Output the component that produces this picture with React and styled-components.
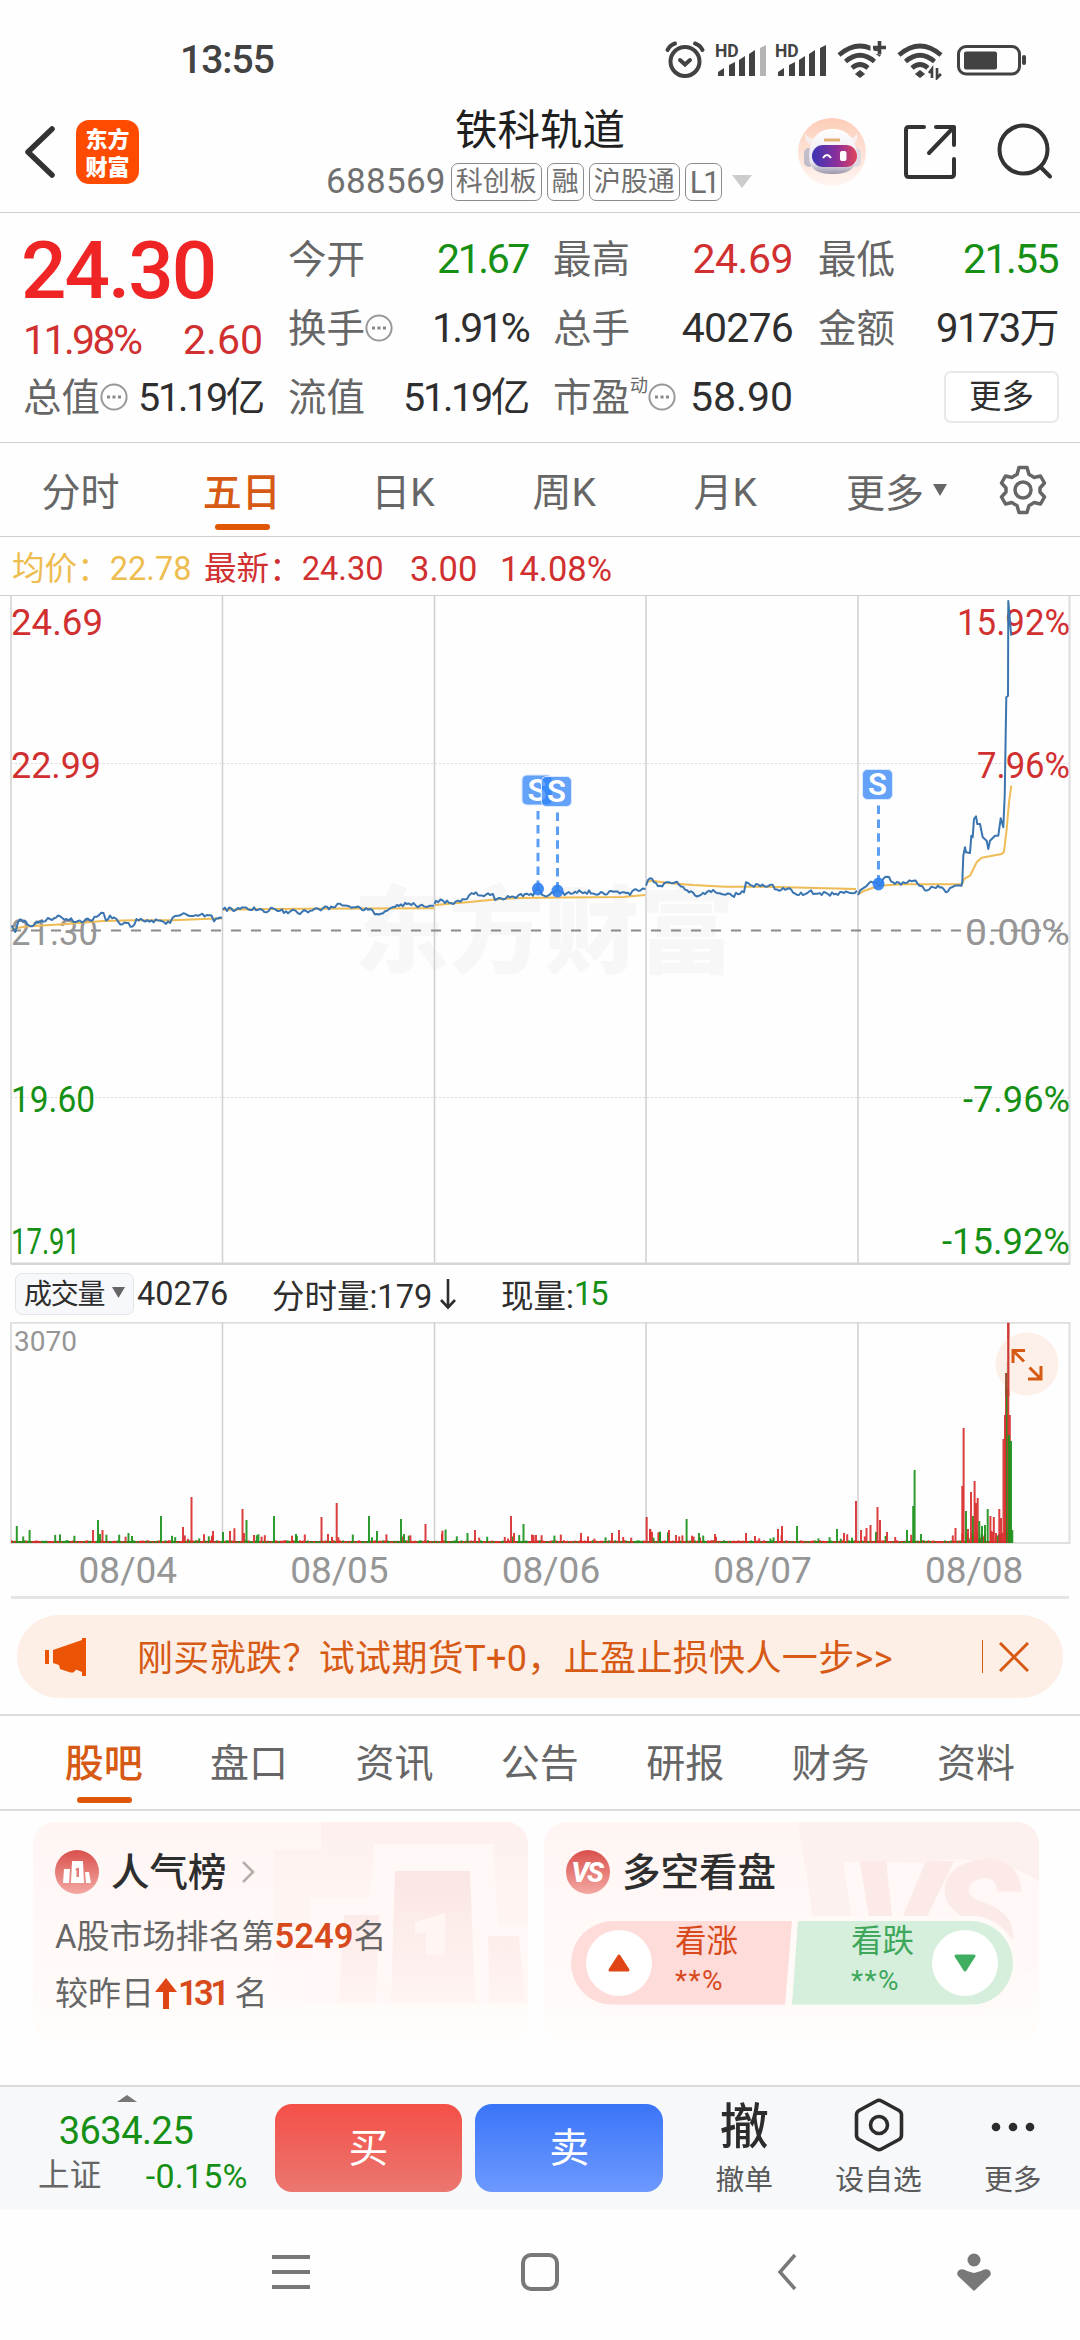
import React from 'react'
import styled, { createGlobalStyle } from 'styled-components'

const GlobalStyle = createGlobalStyle`
  * { box-sizing: border-box; }
  body {
    margin: 0;
    background: #fefefe;
    font-family: Roboto, "Noto Sans CJK SC", sans-serif;
    color: #2e2e2e;
    -webkit-font-smoothing: antialiased;
  }
  svg { display: block; flex: none; }
`
const RED = '#d13030'
const GREEN = '#159015'
const ORANGE = '#d65a14'

const Screen = styled.div`
  width: 1080px;
  height: 2340px;
  overflow: hidden;
  display: flex;
  flex-direction: column;
  white-space: nowrap;
`
const StatusBar = styled.div`
  height: 100px;
  padding: 20px 53px 0 180px;
  display: flex;
  justify-content: space-between;
  align-items: center;
`
const Clock = styled.span`
  font-size: 39px;
  font-weight: 500;
  line-height: 46px;
  letter-spacing: -1px;
  color: #424242;
`
const Header = styled.header`
  height: 114px;
  border-bottom: 1px solid #d0d0d0;
  display: grid;
  grid-template-columns: 298px 480px 1fr;
`
const HeaderLeft = styled.div`
  display: flex;
  align-items: center;
  gap: 20px;
  padding: 0 0 8px 23px;
`
const Logo = styled.div`
  width: 63px;
  height: 64px;
  border-radius: 13px;
  background: #ff4b00;
  color: white;
  font-family: "Noto Sans CJK SC", sans-serif;
  font-weight: 900;
  font-size: 22px;
  line-height: 28px;
  padding-top: 3px;
  text-align: center;
`
const HeaderCenter = styled.div`
  display: flex;
  flex-direction: column;
  align-items: center;
  padding-top: 6px;
`
const StockName = styled.h1`
  margin: 0;
  font-size: 42.5px;
  font-weight: 400;
  line-height: 50px;
  color: #1f1f1f;
  padding-left: 4px;
`
const StockMeta = styled.div`
  display: flex;
  align-items: center;
  gap: 5px;
  margin-top: 7px;
  padding-left: 2px;
  height: 38px;
  svg { margin-left: 5px; }
`
const Code = styled.span`
  font-size: 35px;
  letter-spacing: 0.3px;
  color: #707070;
`
const Badge = styled.span`
  height: 38px;
  border: 1px solid #8c8c8c;
  border-radius: 7px;
  padding: 0 4px;
  font-size: ${p => p.$size || 27}px;
  line-height: 37px;
  letter-spacing: ${p => (p.$size ? -3.5 : 0)}px;
  color: #707070;
`
const HeaderRight = styled.div`
  display: flex;
  align-items: center;
  padding: 0 0 9px 19px;
`
const Quote = styled.section`
  height: 230px;
  border-bottom: 1px solid #d0d0d0;
  padding: 12px 22px 0 23px;
  display: grid;
  grid-template-columns: repeat(4, 240px);
  grid-template-rows: repeat(3, 69px);
  column-gap: 25px;
`
const PriceBlock = styled.div`
  grid-row: span 2;
`
const Price = styled.div`
  font-size: 80px;
  font-weight: 500;
  line-height: 93px;
  letter-spacing: -2px;
  margin-left: -2px;
  color: #ef2525;
`
const Change = styled.div`
  display: flex;
  justify-content: space-between;
  font-size: 41px;
  line-height: 44px;
  color: ${RED};
`
const Cell = styled.div`
  display: flex;
  align-items: center;
  line-height: 69px;
`
const Label = styled.span`
  font-size: 38.5px;
  color: #666;
  sup {
    font-size: 18px;
    line-height: 1;
    vertical-align: 19px;
  }
`
const Value = styled.span`
  margin-left: ${p => (p.$start ? 0 : 'auto')};
  font-size: ${p => p.$size || 41}px;
  letter-spacing: ${p => p.$ls || 0}px;
  color: ${p => p.$color || '#2e2e2e'};
`
const MoreButton = styled.button`
  margin-left: auto;
  margin-right: -1px;
  margin-bottom: 2px;
  width: 115px;
  height: 52px;
  border: 2px solid #e8e8e8;
  border-radius: 7px;
  background: #fff;
  padding: 0;
  font: 400 32.5px/44px Roboto, "Noto Sans CJK SC", sans-serif;
  color: #2e2e2e;
`
const PeriodTabs = styled.nav`
  height: 95px;
  border-bottom: 1px solid #d0d0d0;
  display: flex;
`
const Tab = styled.div`
  position: relative;
  width: ${p => p.$w}px;
  display: flex;
  align-items: center;
  justify-content: center;
  gap: 9px;
  padding-bottom: ${p => p.$lift || 0}px;
  font-size: 39px;
  color: ${p => (p.$active ? ORANGE : '#666')};
  font-weight: ${p => (p.$active ? 500 : 400)};
  &::after {
    content: '';
    display: ${p => (p.$active ? 'block' : 'none')};
    position: absolute;
    bottom: 6px;
    left: calc(50% - 27px);
    width: 55px;
    height: 6px;
    border-radius: 3px;
    background: #e05708;
  }
`
const Averages = styled.div`
  height: 59px;
  border-bottom: 1px solid #d0d0d0;
  padding: 5px 0 0 12px;
  display: flex;
  align-items: center;
  line-height: 40px;
  font-size: 32.6px;
  color: ${RED};
`
const AverageText = styled.span`
  width: ${p => p.$w}px;
  font-size: ${p => p.$size || 32.6}px;
  color: ${p => p.$color || 'inherit'};
`
const VolumeBar = styled.div`
  height: 57px;
  display: flex;
  align-items: center;
  padding-left: 15px;
  font-size: 32.5px;
`
const VolumePicker = styled.div`
  width: 119px;
  height: 42px;
  margin-right: 3px;
  border: 1px solid #e2e4e6;
  border-radius: 7px;
  background: #f6f8fb;
  padding: 0 0 3px 8px;
  display: flex;
  align-items: center;
  gap: 8px;
  font-size: 28px;
  letter-spacing: -1.2px;
`
const VolumeItem = styled.span`
  display: flex;
  align-items: center;
  width: ${p => p.$w}px;
  em { font-style: normal; color: ${GREEN}; letter-spacing: -2px; }
`
const Dates = styled.div`
  height: 55px;
  margin: 0 11px;
  padding: 1px 0 0 11px;
  border-bottom: 3px solid #e4e4e4;
  display: grid;
  grid-template-columns: repeat(5, 211.6px);
  align-items: center;
  text-align: center;
  font-size: 37px;
  line-height: 52px;
  color: #969696;
`
const Banner = styled.div`
  margin: 16px 17px;
  height: 83px;
  border-radius: 42px;
  background: #fdeee6;
  display: flex;
  align-items: center;
  padding: 0 34px 0 28px;
  color: ${ORANGE};
  font-size: 36px;
`
const BannerText = styled.span`
  margin: 0 0 3px 50px;
  flex: 1;
  letter-spacing: 0.35px;
`
const Divider = styled.i`
  width: 1px;
  height: 33px;
  background: ${ORANGE};
  margin-right: 16px;
`
const InfoTabs = styled.nav`
  height: 97px;
  border-top: 2px solid #dcdcdc;
  border-bottom: 2px solid #dcdcdc;
  padding: 0 31px;
  display: flex;
`
const Cards = styled.section`
  height: 275px;
  padding: 11px 33px 0;
  display: flex;
  gap: 16px;
`
const Card = styled.article`
  position: relative;
  overflow: hidden;
  width: 495px;
  height: 220px;
  border-radius: 22px;
  background: linear-gradient(#fff6f4, #fffcfa);
  padding: 26px 22px 0;
`
const CardArt = styled.svg`
  position: absolute;
  inset: 0;
`
const CardHead = styled.div`
  position: relative;
  display: flex;
  align-items: center;
  height: 48px;
  font-size: 38.5px;
  font-weight: 500;
  color: #2e2e2e;
`
const CardTitle = styled.span`
  margin: 0 14px 5px 12px;
`
const CardLine = styled.div`
  position: relative;
  display: flex;
  align-items: center;
  font-size: 33px;
  line-height: 57.5px;
  color: #666;
  margin-top: ${p => p.$top || 0}px;
  b {
    font-size: 34.5px;
    font-weight: 600;
    color: #d84a1c;
    letter-spacing: ${p => p.$ls || 0}px;
  }
`
const VotePill = styled.div`
  position: relative;
  display: flex;
  width: 452px;
  height: 94px;
  margin-top: 20px;
  border: 5px solid #fffaf8;
  border-radius: 47px;
  background: #fffaf8;
  overflow: hidden;
`
const VoteSide = styled.div`
  display: flex;
  align-items: center;
  justify-content: ${p => (p.$up ? 'flex-start' : 'flex-end')};
  gap: ${p => (p.$up ? 23 : 18)}px;
  width: 221px;
  padding: 0 15px;
  background: ${p => (p.$up ? '#fddcd9' : '#d6efdc')};
  color: ${p => (p.$up ? '#d84a1c' : '#3fa75c')};
  clip-path: ${p => (p.$up ? 'polygon(0 0, 100% 0, 214px 100%, 0 100%)' : 'polygon(6px 0, 100% 0, 100% 100%, 0 100%)')};
`
const VoteCircle = styled.div`
  width: 66px;
  height: 66px;
  border-radius: 50%;
  background: #fff;
  display: flex;
  align-items: center;
  justify-content: center;
`
const VoteText = styled.div`
  font-size: 31.5px;
  line-height: 40px;
  padding-bottom: 4px;
  small {
    display: block;
    font-size: 28px;
    line-height: 38px;
    letter-spacing: 1.5px;
  }
`
const ActionBar = styled.footer`
  height: 126px;
  border-top: 2px solid #dcdcdc;
  background: #f6f8fa;
  display: flex;
`
const IndexBlock = styled.div`
  width: 275px;
  padding-top: 8px;
  color: ${GREEN};
`
const IndexMarker = styled.div`
  padding-left: 117px;
`
const IndexValue = styled.div`
  width: 252px;
  text-align: center;
  font-size: 38px;
  line-height: 46px;
  letter-spacing: -0.5px;
  margin-top: 6px;
`
const IndexRow = styled.div`
  display: flex;
  justify-content: space-between;
  padding: 0 27px 0 38px;
  font-size: 34px;
  line-height: 44px;
  letter-spacing: 0.2px;
  span { font-size: 31.5px; color: #666; }
`
const TradeButton = styled.button`
  width: 188px;
  height: 88px;
  margin: 17px 13px 0 0;
  padding: 0 0 5px;
  border: 0;
  border-radius: 17px;
  background: ${p => (p.$buy ? 'linear-gradient(#f45048, #ea7770)' : 'linear-gradient(#3a75f8, #6d99fe)')};
  color: #fff;
  font: 400 40px Roboto, "Noto Sans CJK SC", sans-serif;
`
const Action = styled.div`
  width: 134.5px;
  margin-left: ${p => (p.$first ? 1 : 0)}px;
  display: flex;
  flex-direction: column;
  align-items: center;
  font-size: 28.8px;
  line-height: 34px;
  color: #5a5a5a;
`
const ActionIcon = styled.div`
  height: 64px;
  margin-top: ${p => (p.$text ? 13 : 10)}px;
  margin-bottom: ${p => (p.$text ? -1 : 2)}px;
  display: flex;
  align-items: center;
  font-size: 49px;
  line-height: 56px;
  font-weight: 500;
  color: #2c2c2c;
  padding-bottom: 7px;
`
const NavBar = styled.div`
  height: 130px;
  display: flex;
  align-items: center;
  padding: 0 88px 6px 272px;
  justify-content: space-between;
`
const NavKeys = styled.div`
  display: flex;
  align-items: center;
  gap: 211px;
`

/* chart data: one polyline per trading day */
const days = [
  [[11.5, 926.5], [15.3, 933], [18.3, 922.5], [25, 921.7], [30, 927], [36.5, 922.5], [50, 920], [58, 916.5], [66.5, 920], [78, 922], [90, 921.5], [103.5, 914], [106, 921.5], [110, 916.5], [116.5, 920], [120.5, 925.5], [126.5, 924], [132.5, 927.5], [136.5, 920], [143, 921.5], [160, 921.5], [170, 924], [175, 917], [181.5, 915.5], [200, 916], [211.5, 916.5], [214, 922.3], [218, 919.5], [222, 919]],
  [[222.7, 910.7], [240, 910], [260, 910], [266.5, 913.3], [273, 909.3], [280, 911.7], [288, 914.3], [293, 910.7], [298, 914.3], [306, 912], [323, 909.3], [335, 908.3], [340, 904.7], [347, 906.7], [360, 908.7], [370, 910], [377, 915], [387, 911.7], [397, 906], [407, 905], [420, 906.7], [434, 906.7]],
  [[434.5, 905], [436, 901.7], [438, 903.3], [443, 901.7], [451, 904], [458, 901.7], [467, 900], [469, 896.5], [474, 895], [490, 896], [493, 895], [495, 901], [503, 900.5], [508, 897], [516, 899], [521, 895], [533, 896.7], [538, 890], [544, 896.7], [552, 893.3], [558, 891.7], [564.5, 896], [575, 892.7], [603, 894], [624, 893.3], [630, 896], [634, 890.7], [640, 891.7], [645.5, 890]],
  [[646, 886.7], [650, 879.3], [654, 883.3], [660, 886.7], [666.5, 883.3], [675, 883.3], [683, 887.7], [689, 893.3], [699, 896.7], [709, 891.7], [721.6, 895], [732, 896.7], [744, 893.3], [746, 883.3], [752, 886.7], [770.6, 885.7], [779, 891.7], [787, 890], [799, 896], [809, 892.7], [828, 895], [848, 893.3], [857, 891.7]],
  [[858, 896], [864.5, 888.3], [872.6, 883.3], [878.8, 886.7], [887, 877.7], [893, 883.3], [901, 885.7], [913.5, 881.7], [919.6, 886.7], [925, 891.5], [938, 886.7], [946, 893.3], [952, 888.3], [961.5, 886.7]],
]
const lastRun = [[962.3, 883], [963.3, 856.7], [965, 848.3], [966, 853.3], [970, 854], [971.3, 836.7], [972.7, 838.3], [974, 820], [976, 817.3], [977.3, 825], [980, 825], [982.7, 838.3], [986.7, 841.7], [988.3, 850], [990, 841.7], [995, 836.7], [998.3, 836.7], [1000.7, 819.3], [1003.3, 828.3], [1004.7, 796.7], [1006.3, 698.3], [1008, 696.7], [1008.3, 602], [1010.3, 626.7], [1011.3, 636.7]]
const averages = [
  '11.5,930 26,927.5 66,925 103,922 133,921.3 173,921.3 222,919.3',
  '223,910.7 300,909.7 434,909.3',
  '435,906 467,903.3 500,900 520,899 560,898.5 623,898 645,896',
  '646,883 652,881.7 668,884 693,886 725,887.7 766,887.7 856,890',
  '858,895 864.5,891.7 878.8,886.7 901,885.3 962,885.3 964,880 970,876.7 976.7,863.3 981.7,858.7 1001.7,855 1004,852.7 1006.7,830 1009,803.3 1011.3,786.7',
]

// small repeatable jitter, so the curve looks the same on every render
const rand = seed => {
  let s = seed
  return () => {
    s = (s * 16807) % 2147483647
    return s / 2147483647
  }
}
const jagged = (points, seed) => {
  const next = rand(seed)
  const out = []
  points.forEach((p, i) => {
    out.push(p)
    const q = points[i + 1]
    if (!q) return
    const steps = Math.floor((q[0] - p[0]) / 2)
    for (let k = 1; k < steps; k++) {
      const t = k / steps
      out.push([p[0] + (q[0] - p[0]) * t, p[1] + (q[1] - p[1]) * t + (next() - 0.5) * 4])
    }
  })
  return out.map(p => `${p[0].toFixed(1)},${p[1].toFixed(1)}`).join(' ')
}

const columns = [222.5, 434.5, 646, 858]
const leftLabels = [['24.69', 622.5, RED, 92], ['22.99', 765.5, RED, 90], ['21.30', 932.5, '#969696', 87], ['19.60', 1099.5, GREEN, 84], ['17.91', 1242, GREEN, 69]]
const rightLabels = [['15.92%', 622.5, RED, 113], ['7.96%', 765.5, RED, 93], ['0.00%', 932.5, '#969696', 105], ['-7.96%', 1099.5, GREEN, 107], ['-15.92%', 1242, GREEN, 128]]
const markers = [[537, 791, 890], [556.5, 792.5, 892], [877.5, 785.5, 885]]

const PriceChart = () => (
  <svg width="1080" height="669" viewBox="0 597 1080 669">
    <text x="354" y="967" fontSize="95" fontWeight="900" fontFamily="Noto Sans CJK SC, sans-serif" fill="#f7f7f7">东方财富</text>
    <g stroke="#dcdcdc" strokeWidth="2">
      <path d="M11 597V1265M1069.5 597V1265" />
      {columns.map(x => <path key={x} d={`M${x} 597V1265`} stroke="#d0d0d0" strokeWidth="1.5" />)}
      <path d="M11 1265H1070" stroke="#d4d4d4" strokeWidth="3" />
      <path d="M11 764.5H1069M11 1098.5H1069" strokeWidth="1" strokeDasharray="2 2" />
    </g>
    <path d="M11 931.5H1069" stroke="#8a8a8a" strokeWidth="2" strokeDasharray="10 10" />
    {leftLabels.map(([t, y, c, w]) => (
      <text key={t} x="11" y={y + 13} fontSize="37" fill={c} textLength={w} lengthAdjust="spacingAndGlyphs">{t}</text>
    ))}
    {rightLabels.map(([t, y, c, w]) => (
      <text key={t} x={1070 - w} y={y + 13} fontSize="37" fill={c} textLength={w} lengthAdjust="spacingAndGlyphs">{t}</text>
    ))}
    <g fill="none" strokeWidth="2" strokeLinejoin="round">
      {averages.map(p => <polyline key={p} points={p} stroke="#efbb55" />)}
      {days.map((d, i) => <polyline key={i} points={jagged(d, i * 77 + 13) + (i === 4 ? ' ' + lastRun.join(' ') : '')} stroke="#3b75b0" />)}
    </g>
    {markers.map(([x, y, end]) => (
      <g key={x}>
        <path d={`M${x + 1} ${y + 21}V${end}`} stroke="#5d9ef5" strokeWidth="3" strokeDasharray="8.5 5.4" />
        <ellipse cx={x + 1} cy={end} rx="6" ry="6.5" fill="#2f80f0" fillOpacity="0.9" />
        <rect x={x - 15} y={y - 15} width="30" height="30" rx="5" fill="#2b7ff8" fillOpacity="0.73" stroke="#dbe9fe" strokeWidth="1" />
        <text x={x} y={y + 10.5} textAnchor="middle" fontSize="31" fontWeight="600" fill="#fff">S</text>
      </g>
    ))}
  </svg>
)

// [x, height, 1 = up / 0 = down]
const spikes = [
  [93, 13, 1], [98, 23, 0], [102.5, 13, 1], [128.5, 10, 0], [161, 27, 0], [183, 16, 1], [191.5, 46, 1], [213, 12, 1], [223, 11, 0], [230, 12, 1], [242.5, 34, 1], [246.5, 23, 0], [254, 8, 1], [274, 27, 0], [296, 9, 0], [321.5, 26, 1], [328, 9, 1], [336.7, 40, 1], [369, 27, 0], [377, 12, 0], [401, 24, 0], [425.5, 19, 1], [442, 9, 1], [467.5, 10, 0], [475, 13, 1], [511, 27, 1], [514, 10, 1], [523.5, 19, 0], [536, 8, 1], [581, 10, 1], [612, 10, 1], [619, 13, 1], [646.7, 26, 1], [650, 14, 1], [660, 10, 0], [669, 13, 1], [686.6, 24, 0], [699, 10, 0], [715, 9, 1], [746, 10, 1], [755, 7, 1], [778, 14, 1], [782, 17, 1], [797, 17, 0], [837, 14, 0], [844, 10, 1], [856, 42, 1], [861, 13, 1], [866.5, 15, 1], [870.5, 18, 1], [877.5, 36, 1], [880, 23, 1], [887, 11, 1], [907, 13, 0], [914.6, 73, 0], [913.2, 37, 0], [921, 9, 0], [955.5, 15, 1], [962.3, 57, 1], [963.6, 115, 1], [966, 32, 0], [968, 14, 1], [971, 51, 1], [973, 27, 0], [974.6, 62, 1], [976, 40, 1], [977.7, 45, 1], [979.3, 22, 0], [982, 17, 0], [985, 18, 0], [987.7, 34, 0], [990.4, 27, 1], [993.8, 26, 1], [996, 10, 1], [999.3, 34, 1], [1001, 25, 1], [1003.5, 104, 1], [1005, 128, 1], [1006, 170, 1], [1007, 181, 0], [1008.3, 220, 1], [1009.8, 128, 1], [1009, 108, 0], [1011, 102, 0], [1012.3, 13, 0],
]
const VolumeChart = () => {
  const next = rand(4211)
  const noise = []
  for (let x = 12; x < 1010; x += 1.6) {
    const busy = x > 960 || (x - 11) % 211.7 < 22
    const h = next() > 0.87 ? 4 + next() * (busy ? 14 : 5) : 1 + next() * (x > 965 ? 11 : 1.8)
    noise.push([x, h, next() > 0.42 ? 1 : 0])
  }
  return (
    <svg width="1080" height="222" viewBox="0 1322 1080 222">
      <path d="M11 1543V1322.7H1069.5V1543Z" fill="none" stroke="#dfdfdf" strokeWidth="2" />
      {columns.map(x => <path key={x} d={`M${x} 1322V1543`} stroke="#d0d0d0" strokeWidth="1.5" />)}
      <text x="14" y="1351" fontSize="28" fill="#969696">3070</text>
      <path d="M11 1542H1011" stroke="#a03a20" strokeWidth="2" />
      {noise.concat(spikes).map(([x, h, up], i) => (
        <rect key={i} x={x - 1} y={1543 - h} width="2" height={h} fill={up ? '#d92f2f' : '#1c921c'} fillOpacity="0.92" />
      ))}
      <circle cx="1027" cy="1364" r="31.5" fill="#fdeee6" fillOpacity="0.88" />
      <path d="M1008.3 1322.7V1396" stroke="#cf3c36" strokeWidth="2.2" />
      <path d="M1006.3 1373V1396" stroke="#94502c" strokeWidth="2.4" />
      <g fill="none" stroke={ORANGE} strokeWidth="3">
        <path d="M1013 1363V1350.5H1025M1014 1351.5L1024 1361.5M1041 1366V1379H1028M1040 1378L1029.5 1367.5" />
      </g>
    </svg>
  )
}

const Signal = ({ weak }) => (
  <svg width="52" height="38" viewBox="0 0 52 38" fill="#424242">
    <text x="0" y="15.500" fontSize="17.500" fontWeight="700">HD</text>
    <path d="M3 35V31L9 27V35ZM14 35V24L20 21V35ZM24 35V19L30 15V35ZM34 35V13L40 9V35Z" />
    <path d="M45 35V7L51 4V35Z" fill={weak ? '#b5b5b5' : '#424242'} />
  </svg>
)
const Wifi = ({ children }) => (
  <svg width="52" height="40" viewBox="0 0 52 40" fill="none" stroke="#424242" strokeWidth="4.6">
    <path d="M3 15Q24 -3 45 15M9.500 21.500Q24 9 38.500 21.500M16 28Q24 21 32 28" />
    <path d="M24 30.500L28.500 34L24 37.500L19.500 34Z" fill="#424242" strokeWidth="1" />
    {children}
  </svg>
)
const StatusIcons = styled.div`
  display: flex;
  align-items: center;
  gap: 8.6px;
`

const Dots = () => (
  <svg width="28" height="30" viewBox="0 0 28 30">
    <circle cx="14" cy="14" r="12.600" fill="none" stroke="#999" strokeWidth="2" />
    <path d="M7 14H10M12.500 14H15.500M18 14H21" stroke="#888" strokeWidth="3" />
  </svg>
)
const Caret = ({ w = 14, h = 12, color = '#666', up }) => (
  <svg width={w} height={h}>
    <path d={up ? `M0 ${h}L${w / 2} 0L${w} ${h}Z` : `M0 0H${w}L${w / 2} ${h}Z`} fill={color} />
  </svg>
)
const Robot = () => (
  <svg width="70" height="70" viewBox="0 0 70 70">
    <defs>
      <linearGradient id="sky" x2="0" y2="1"><stop stopColor="#fdcdb8" /><stop offset="1" stopColor="#fff6f2" /></linearGradient>
      <linearGradient id="visor"><stop stopColor="#3a35b5" /><stop offset=".55" stopColor="#8a2f9b" /><stop offset="1" stopColor="#e0455a" /></linearGradient>
      <linearGradient id="shell" x2="0" y2="1"><stop stopColor="#fff" /><stop offset=".75" stopColor="#e9e4ec" /><stop offset="1" stopColor="#9a96aa" /></linearGradient>
    </defs>
    <circle cx="35" cy="35" r="34" fill="url(#sky)" />
    <path d="M8 16C8 24 10 27 16 27L20 22C14 22 10 20 8 16ZM60 16C61 24 59 27 53 27L49 22C55 22 58 20 60 16Z" fill="#f7efee" />
    <rect x="7" y="31" width="10" height="19" rx="5" fill="#c0bcca" />
    <rect x="54" y="31" width="10" height="19" rx="5" fill="#ded9e2" />
    <path d="M36 12C50 12 59 22 60 38C60 52 51 57 36 57C20 57 12 52 12 39C12 22 21 12 36 12Z" fill="url(#shell)" />
    <rect x="15" y="28" width="45" height="22" rx="11" fill="url(#visor)" />
    <path d="M27 23H43" stroke="#e5b078" strokeWidth="3" />
    <path d="M26 41Q30 35 34 41" fill="none" stroke="#fff" strokeWidth="2" />
    <rect x="43" y="34" width="6.500" height="10" rx="2" fill="#fff" />
  </svg>
)
const HeaderIcons = styled.div`
  display: flex;
  gap: 39px;
  margin-left: 35px;
`

const Disc = ({ children, id }) => (
  <svg width="44" height="44" viewBox="0 0 44 44">
    <defs><linearGradient id={id} x2="0" y2="1"><stop stopColor="#d9504c" /><stop offset="1" stopColor="#f4a8a3" /></linearGradient></defs>
    <circle cx="22" cy="22" r="22" fill={`url(#${id})`} />
    {children}
  </svg>
)

const App = () => (
  <>
    <GlobalStyle />
    <Screen>
      <StatusBar>
        <Clock>13:55</Clock>
        <StatusIcons>
          <svg width="42" height="40" viewBox="0 0 42 40" fill="none" stroke="#424242" strokeWidth="4" strokeLinecap="round">
            <circle cx="21" cy="21.500" r="14.500" />
            <path d="M3.500 10Q6 5 11 3.500M38.500 10Q36 5 31 3.500M16 20L21 24.500L26 20" />
          </svg>
          <Signal weak />
          <Signal />
          <Wifi>
            <path d="M36 0V12L52 14" stroke="#fefefe" strokeWidth="3" />
            <path d="M37 7.500H50M43.500 1V14" strokeWidth="3.600" />
          </Wifi>
          <Wifi>
            <path d="M36 38V28M42 28V38" stroke="#fefefe" strokeWidth="9" />
            <path d="M36 38V29L33 33M41 28V38L45 34" strokeWidth="2.600" />
          </Wifi>
          <svg width="70" height="32" viewBox="0 0 70 32" fill="#424242">
            <rect x="1.500" y="2.500" width="61" height="27.500" rx="7.500" fill="none" stroke="#424242" strokeWidth="3" />
            <rect x="7" y="7.500" width="33" height="18" rx="2" />
            <rect x="65" y="11" width="4" height="10" rx="2" />
          </svg>
        </StatusIcons>
      </StatusBar>

      <Header>
        <HeaderLeft>
          <svg width="33" height="54" viewBox="0 0 33 54">
            <path d="M29 4L5 27L29 50" fill="none" stroke="#333" strokeWidth="5.500" strokeLinecap="round" strokeLinejoin="round" />
          </svg>
          <Logo>东方<br />财富</Logo>
        </HeaderLeft>
        <HeaderCenter>
          <StockName>铁科轨道</StockName>
          <StockMeta>
            <Code>688569</Code>
            <Badge>科创板</Badge>
            <Badge>融</Badge>
            <Badge>沪股通</Badge>
            <Badge $size="31">L1</Badge>
            <Caret w={20} h={13} color="#ccc" />
          </StockMeta>
        </HeaderCenter>
        <HeaderRight>
          <Robot />
          <HeaderIcons>
            <svg width="56" height="58" viewBox="0 0 56 58" fill="none" stroke="#333" strokeWidth="4" strokeLinecap="round" strokeLinejoin="round">
              <path d="M22 4H7Q4 4 4 7V51Q4 54 7 54H49Q52 54 52 51V36M34 4H52V22M52 4L27 30" />
            </svg>
            <svg width="56" height="58" viewBox="0 0 56 58" fill="none" stroke="#333" strokeWidth="4" strokeLinecap="round">
              <circle cx="26.500" cy="26.500" r="24" />
              <path d="M43.500 44L53 53.500" />
            </svg>
          </HeaderIcons>
        </HeaderRight>
      </Header>

      <Quote>
        <PriceBlock>
          <Price>24.30</Price>
          <Change><Value $start $color={RED} $ls={-2.6}>11.98%</Value><Value $color={RED}>2.60</Value></Change>
        </PriceBlock>
        <Cell><Label>今开</Label><Value $color={GREEN} $ls={-2.4}>21.67</Value></Cell>
        <Cell><Label>最高</Label><Value $color={RED} $ls={-0.5}>24.69</Value></Cell>
        <Cell><Label>最低</Label><Value $color={GREEN} $ls={-1.6}>21.55</Value></Cell>
        <Cell><Label>换手</Label><Dots /><Value $ls={-2.8}>1.91%</Value></Cell>
        <Cell><Label>总手</Label><Value $ls={-0.8}>40276</Value></Cell>
        <Cell><Label>金额</Label><Value $ls={-1.6} $size={40}>9173万</Value></Cell>
        <Cell><Label>总值</Label><Dots /><Value $ls={-2.3} $size={39.5}>51.19亿</Value></Cell>
        <Cell><Label>流值</Label><Value $ls={-2.3} $size={39.5}>51.19亿</Value></Cell>
        <Cell><Label>市盈<sup>动</sup></Label><Dots /><Value>58.90</Value></Cell>
        <Cell><MoreButton>更多</MoreButton></Cell>
      </Quote>

      <PeriodTabs>
        {['分时', '五日', '日K', '周K', '月K'].map(t => <Tab key={t} $w={161.2} $active={t === '五日'} $lift={1}>{t}</Tab>)}
        <Tab $w={181}>更多<Caret /></Tab>
        <Tab $w={73}>
          <svg width="50" height="50" viewBox="0 0 50 50" fill="none" stroke="#666" strokeWidth="3.500" strokeLinejoin="round">
            <path d="M21 2.500H29L31 9.500Q33.500 10.500 36 12.500L42.500 11L46.500 18L42 23V27L46.500 32L42.500 39L36 37.500Q33.500 39.500 31 40.500L29 47.500H21L19 40.500Q16.500 39.500 14 37.500L7.500 39L3.500 32L8 27V23L3.500 18L7.500 11L14 12.500Q16.500 10.500 19 9.500Z" />
            <circle cx="25" cy="25" r="8" />
          </svg>
        </Tab>
      </PeriodTabs>

      <Averages>
        <AverageText $w={192} $color="#eebd50">均价：22.78</AverageText>
        <AverageText $w={206}>最新：24.30</AverageText>
        <AverageText $w={90} $size={34.5}>3.00</AverageText>
        <AverageText $w={130} $size={34.5}>14.08%</AverageText>
      </Averages>

      <PriceChart />

      <VolumeBar>
        <VolumePicker>成交量<Caret w={13} h={11} /></VolumePicker>
        <VolumeItem $w={135}>40276</VolumeItem>
        <VolumeItem $w={229}>
          分时量:179
          <svg width="26" height="32" viewBox="-8 0 26 32" fill="none" stroke="#2e2e2e" strokeWidth="2.600"><path d="M8 1V29M1 22L8 29.500L15 22" /></svg>
        </VolumeItem>
        <VolumeItem $w={110}>现量:<em>15</em></VolumeItem>
      </VolumeBar>
      <VolumeChart />
      <Dates>{['08/04', '08/05', '08/06', '08/07', '08/08'].map(d => <span key={d}>{d}</span>)}</Dates>

      <Banner>
        <svg width="42" height="38" viewBox="0 0 42 38" fill="#ea5404">
          <path d="M0 12H4V26H0ZM8 12L37 2V0H41V38H37V34L31 31.500Q29 36 24 34L15 31L14 27L8 25Z" />
        </svg>
        <BannerText>刚买就跌？试试期货T+0，止盈止损快人一步&gt;&gt;</BannerText>
        <Divider />
        <svg width="30" height="30" viewBox="0 0 30 30" stroke={ORANGE} strokeWidth="3"><path d="M1 1L29 29M29 1L1 29" /></svg>
      </Banner>

      <InfoTabs>
        {['股吧', '盘口', '资讯', '公告', '研报', '财务', '资料'].map(t => <Tab key={t} $w={145.4} $active={t === '股吧'} $lift={5}>{t}</Tab>)}
      </InfoTabs>

      <Cards>
        <Card>
          <CardArt width="495" height="220" viewBox="33 1821 495 220">
            <defs>
              <linearGradient id="fade" x2="0" y2="1"><stop stopColor="#fdf0ee" /><stop offset="1" stopColor="#fffaf8" /></linearGradient>
              <linearGradient id="podium" x2="0" y2="1"><stop stopColor="#fae6e4" /><stop offset="1" stopColor="#fff4f2" /></linearGradient>
            </defs>
            <path d="M274 1849H321V1821H528V2001H274Z" fill="url(#fade)" />
            <path d="M310 1896H370L374 1843H493L498 1925H528V2003H306Z" fill="#fff8f6" />
            <path d="M395 1870H470L475 2001H391ZM344 1914H379L376 2001H339ZM488 1935H519L525 2001H490Z" fill="url(#podium)" />
            <path d="M415 1921L445 1912V1954H426V1931L415 1933Z" fill="#fff6f4" />
          </CardArt>
          <CardHead>
            <Disc id="rank">
              <path d="M9 19H15L14 33H8ZM17 11H28L29 33H16ZM30 22H34L36 33H31Z" fill="#fff" />
              <path d="M20 19L24 17.500V27H21.500V20.500" fill="#df7a75" />
            </Disc>
            <CardTitle>人气榜</CardTitle>
            <svg width="14" height="24" viewBox="0 0 14 24"><path d="M2 2L12 12L2 22" fill="none" stroke="#b5aeac" strokeWidth="2.600" /></svg>
          </CardHead>
          <CardLine $top={12}>A股市场排名第<b>5249</b>名</CardLine>
          <CardLine $ls={-3.6}>
            较昨日
            <svg width="24" height="31" viewBox="0 0 24 31"><path d="M12 0L23 14H15V31H9V14H1Z" fill="#e04515" /></svg>
            <b>131</b>&nbsp;名
          </CardLine>
        </Card>
        <Card>
          <CardArt width="495" height="220" viewBox="544 1821 495 220">
            <path d="M798 1821H1039V1960H820Z" fill="#fdf1ef" />
            <path d="M843 1861L926 1862Q990 1850 1039 1880V1970H860Z" fill="#fff8f6" />
            <text x="850" y="1964" fontSize="146" fontWeight="900" fontStyle="italic" letterSpacing="-12" fill="#fceae8">VS</text>
          </CardArt>
          <CardHead>
            <Disc id="versus">
              <text x="20.500" y="32" textAnchor="middle" fontSize="28" fontWeight="800" fontStyle="italic" letterSpacing="-2" fill="#fff">VS</text>
            </Disc>
            <CardTitle>多空看盘</CardTitle>
          </CardHead>
          <VotePill>
            <VoteSide $up>
              <VoteCircle><svg width="22" height="18" viewBox="0 0 22 18"><path d="M11 2L20 16H2Z" fill="#e04515" stroke="#e04515" strokeWidth="3" strokeLinejoin="round" /></svg></VoteCircle>
              <VoteText>看涨<small>**%</small></VoteText>
            </VoteSide>
            <VoteSide>
              <VoteText>看跌<small>**%</small></VoteText>
              <VoteCircle><svg width="22" height="18" viewBox="0 0 22 18"><path d="M11 16L20 2H2Z" fill="#3fae60" stroke="#3fae60" strokeWidth="3" strokeLinejoin="round" /></svg></VoteCircle>
            </VoteSide>
          </VotePill>
        </Card>
      </Cards>

      <ActionBar>
        <IndexBlock>
          <IndexMarker><Caret up w={20} h={7} color="#777" /></IndexMarker>
          <IndexValue>3634.25</IndexValue>
          <IndexRow><span>上证</span>-0.15%</IndexRow>
        </IndexBlock>
        <TradeButton $buy>买</TradeButton>
        <TradeButton>卖</TradeButton>
        <Action $first><ActionIcon $text>撤</ActionIcon>撤单</Action>
        <Action>
          <ActionIcon>
            <svg width="50" height="54" viewBox="0 0 50 54" fill="none" stroke="#2c2c2c" strokeWidth="3.600" strokeLinejoin="round">
              <path d="M22.500 3Q25 1.500 27.500 3L45 12.500Q47.500 14 47.500 17V37Q47.500 40 45 41.500L27.500 51Q25 52.500 22.500 51L5 41.500Q2.500 40 2.500 37V17Q2.500 14 5 12.500Z" />
              <circle cx="25" cy="27" r="8.500" />
            </svg>
          </ActionIcon>
          设自选
        </Action>
        <Action>
          <ActionIcon>
            <svg width="46" height="50" viewBox="0 0 46 50" fill="#2c2c2c"><circle cx="6" cy="27" r="4.300" /><circle cx="23" cy="27" r="4.300" /><circle cx="40" cy="27" r="4.300" /></svg>
          </ActionIcon>
          更多
        </Action>
      </ActionBar>

      <NavBar>
        <NavKeys>
          <svg width="38" height="38" viewBox="0 0 38 38" stroke="#787878" strokeWidth="4"><path d="M0 4H38M0 19H38M0 34H38" /></svg>
          <svg width="38" height="38" viewBox="0 0 38 38"><rect x="2" y="2" width="34" height="34" rx="8" fill="none" stroke="#787878" strokeWidth="4" /></svg>
          <svg width="38" height="38" viewBox="-7 0 38 38"><path d="M18 2L3 19L18 36" fill="none" stroke="#787878" strokeWidth="3.500" /></svg>
        </NavKeys>
        <svg width="36" height="40" viewBox="0 0 36 40" fill="#787878">
          <circle cx="18" cy="8" r="6.500" />
          <path d="M3 18Q7 16 11 19L18 21L25 19Q29 16 33 18Q36 21 34 24L18 39L2 24Q0 21 3 18Z" />
        </svg>
      </NavBar>
    </Screen>
  </>
)
export default App
